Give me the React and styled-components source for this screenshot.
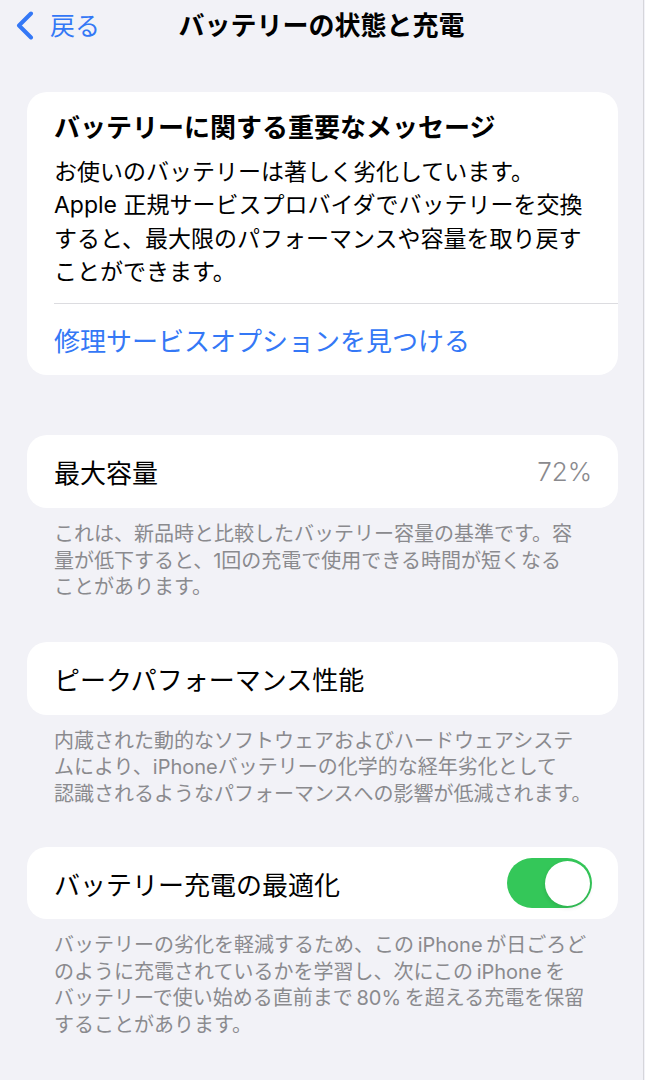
import React from 'react';
import styled, { createGlobalStyle } from 'styled-components';

const Global = createGlobalStyle`
  html, body { margin: 0; padding: 0; background: #f2f2f7; }
  body {
    font-family: Inter, "Noto Sans CJK JP", sans-serif;
    -webkit-font-smoothing: antialiased;
    color: #000;
  }
`;

const Page = styled.div`
  width: 644px;
  min-height: 1080px;
  box-sizing: border-box;
  border-right: 1px solid #d6d6db;
  display: flex;
  flex-direction: column;
`;

const NavBar = styled.header`
  height: 51px;
  padding: 0 15px;
  display: grid;
  grid-template-columns: 1fr auto 1fr;
  align-items: center;
`;

const BackButton = styled.div`
  display: flex;
  align-items: center;
  gap: 16px;
  color: #3478f6;
  font-size: 25px;
  line-height: 30px;
`;

const NavTitle = styled.h1`
  margin: 0;
  font-size: 26px;
  line-height: 34px;
  font-weight: 700;
  white-space: nowrap;
`;

const Content = styled.main`
  padding: 41px 25px 0 27px;
  display: flex;
  flex-direction: column;
`;

const Card = styled.section`
  background: #fff;
  border-radius: 20px;
  overflow: hidden;
  margin-top: ${p => p.$gap || 0}px;
`;

const MessageBody = styled.div`
  padding: 19px 24px 14px 27px;
`;

const MessageTitle = styled.h2`
  margin: 0;
  font-size: 26px;
  line-height: 34px;
  font-weight: 700;
  white-space: nowrap;
`;

const MessageText = styled.p`
  margin: 11px 0 0;
  font-size: 23px;
  line-height: 33.3px;
  white-space: nowrap;
`;

const Separator = styled.div`
  height: 1px;
  margin-left: 27px;
  background: #dcdce0;
`;

const LinkRow = styled.div`
  height: 71px;
  padding-left: 27px;
  display: flex;
  align-items: center;
  color: #3478f6;
  font-size: 26px;
`;

const Row = styled.div`
  height: ${p => p.$h || 73}px;
  padding: 0 26px 0 27px;
  display: flex;
  align-items: center;
  justify-content: space-between;
  font-size: 26px;
`;

const Value = styled.span`
  color: #8a8a8e;
  font-size: 26px;
  font-weight: 300;
`;

const Footer = styled.p`
  margin: 0 0 ${p => p.$mb || 41}px;
  padding: 13px 27px 0 27px;
  font-size: 20px;
  line-height: 26.5px;
  color: #8a8a8e;
  white-space: nowrap;
`;

const Toggle = styled.span`
  position: relative;
  width: 85px;
  height: 50px;
  border-radius: 25px;
  background: #34c759;
  flex: none;
`;

const Knob = styled.span`
  position: absolute;
  top: 2.5px;
  right: 2.5px;
  width: 45px;
  height: 45px;
  border-radius: 50%;
  background: #fff;
  box-shadow: 0 2px 4px rgba(0, 0, 0, 0.12);
`;

const Chevron = () => (
  <svg width="19" height="29" viewBox="0 0 19 29" fill="none">
    <path d="M16 2.5 L4 14.5 L16 26.5" stroke="#3478f6" strokeWidth="4" strokeLinecap="round" strokeLinejoin="round" />
  </svg>
);

export default function App() {
  return (
    <>
      <Global />
      <Page>
        <NavBar>
          <BackButton>
            <Chevron />
            <span>戻る</span>
          </BackButton>
          <NavTitle>バッテリーの状態と充電</NavTitle>
          <span />
        </NavBar>
        <Content>
          <Card>
            <MessageBody>
              <MessageTitle>バッテリーに関する重要なメッセージ</MessageTitle>
              <MessageText>
                お使いのバッテリーは著しく劣化しています。<br />
                Apple 正規サービスプロバイダでバッテリーを交換<br />
                すると、最大限のパフォーマンスや容量を取り戻す<br />
                ことができます。
              </MessageText>
            </MessageBody>
            <Separator />
            <LinkRow>修理サービスオプションを見つける</LinkRow>
          </Card>

          <Card $gap={60}>
            <Row>
              <span>最大容量</span>
              <Value>72%</Value>
            </Row>
          </Card>
          <Footer>
            これは、新品時と比較したバッテリー容量の基準です。容<br />
            量が低下すると、1回の充電で使用できる時間が短くなる<br />
            ことがあります。
          </Footer>

          <Card>
            <Row>
              <span>ピークパフォーマンス性能</span>
            </Row>
          </Card>
          <Footer $mb={40}>
            内蔵された動的なソフトウェアおよびハードウェアシステ<br />
            ムにより、iPhoneバッテリーの化学的な経年劣化として<br />
            認識されるようなパフォーマンスへの影響が低減されます。
          </Footer>

          <Card>
            <Row $h={72}>
              <span>バッテリー充電の最適化</span>
              <Toggle><Knob /></Toggle>
            </Row>
          </Card>
          <Footer>
            バッテリーの劣化を軽減するため、この{'\u2009'}iPhone{'\u2009'}が日ごろど<br />
            のように充電されているかを学習し、次にこの{'\u2009'}iPhone{'\u2009'}を<br />
            バッテリーで使い始める直前まで{'\u2009'}80%{'\u2009'}を超える充電を保留<br />
            することがあります。
          </Footer>
        </Content>
      </Page>
    </>
  );
}
